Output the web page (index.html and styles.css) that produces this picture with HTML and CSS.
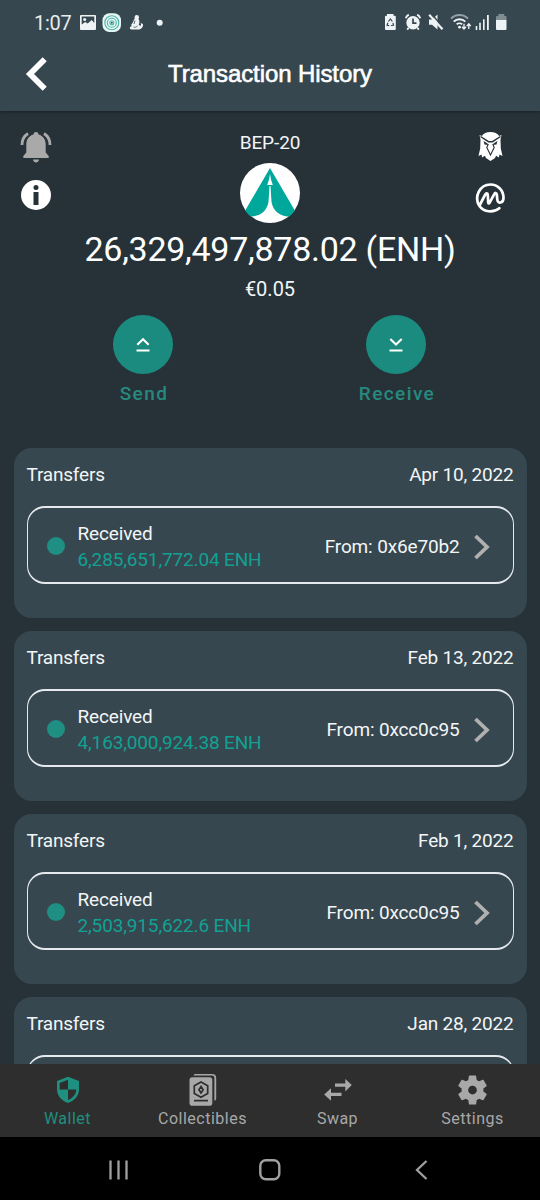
FILE: index.html
```html
<!DOCTYPE html>
<html lang="en">
<head>
<meta charset="utf-8">
<title>Transaction History</title>
<link rel="stylesheet" href="styles.css">
</head>
<body>
<div class="app">
  <header class="header">
    <div class="status">
      <span class="clock">1:07</span>
      <svg class="status-left" width="90" height="24" viewBox="77 11 90 24">
        <path fill="#eef3f5" fill-rule="evenodd" d="M81 15h14a1 1 0 0 1 1 1v13a1 1 0 0 1-1 1H81a1 1 0 0 1-1-1V16a1 1 0 0 1 1-1zm.7 1.500v8l3.500-2.500 2.500 1.500 4-3.500 2.600 3V16.500z"/>
        <circle cx="84.700" cy="19.500" r="1.500" fill="#eef3f5"/>
        <rect x="102.500" y="13.200" width="18.500" height="18.800" rx="7" fill="#e8f7f5"/>
        <g fill="none" stroke="#4fb5a9" stroke-width="1.100"><circle cx="111.800" cy="22.700" r="7"/><circle cx="111.800" cy="22.700" r="4.500"/><circle cx="111.800" cy="22.700" r="2"/></g>
        <circle cx="111.800" cy="22.700" r="1" fill="#24675f"/>
        <circle cx="136.800" cy="17.300" r="2.200" fill="#eef3f5"/>
        <path fill="#eef3f5" d="M134.500 18.500h3.700c1.500 2 1.500 4 .6 6 .8 1.500 1.800 1.500 2.300.3l-.6-1.800 2.400 1 .1 1.700c-.6 2.700-3 3.900-5.500 3.900h-5c-3.200 0-3.600-3-.8-3.400l-.5-1.500 1.600-2.300z"/>
        <path d="M133.500 27c1.500.6 3 .2 4-1.200M135 20.500l-1 3.500" stroke="#37474f" stroke-width=".8" fill="none"/>
        <circle cx="159.700" cy="22.800" r="3" fill="#eef3f5"/>
      </svg>
      <svg class="status-right" width="124" height="24" viewBox="384 11 124 24">
        <g fill="#eef3f5">
          <path d="M387 14h6.500v1.800h1.300a1 1 0 0 1 1 1V29a1 1 0 0 1-1 1H386a1 1 0 0 1-1-1V16.800a1 1 0 0 1 1-1h1z"/>
          <circle cx="413" cy="22.700" r="6.700"/>
          <path d="M429 19.500h3l5.500-5v15l-5.500-4.800h-3z"/>
          <rect x="475.700" y="26" width="1.600" height="4"/><rect x="479.200" y="22.700" width="1.600" height="7.300"/><rect x="483" y="19.300" width="1.600" height="10.700"/><rect x="487" y="15" width="1.800" height="15"/>
          <path d="M496 20h10.500v9a1 1 0 0 1-1 1H497a1 1 0 0 1-1-1z"/>
        </g>
        <path d="M388.400 21.500l2-2.500 2 2.500M392.900 23l.6 2.300-2.500.2M389.200 25.600l-2.100-.3.800-2.500" fill="none" stroke="#37474f" stroke-width="1.200"/>
        <path d="M413 18.500v4.700h3.500" fill="none" stroke="#37474f" stroke-width="1.700"/>
        <path d="M405.800 18.200c.5-1.600 1.500-2.700 3-3.500M420.200 18.200c-.5-1.600-1.500-2.700-3-3.500M408.500 28l-1.300 1.700M417.500 28l1.300 1.700" fill="none" stroke="#eef3f5" stroke-width="1.900"/>
        <path d="M430.700 13l13 15" stroke="#37474f" stroke-width="1.500"/>
        <path d="M429.200 14.800l13.300 14.500" stroke="#eef3f5" stroke-width="2.200"/>
        <path d="M451 18.700c4.500-5 12.500-5 17 0" fill="none" stroke="#93a0a6" stroke-width="1.900"/>
        <path d="M453.700 21.700c3-3.200 8.600-3.200 11.600 0M456.700 24.400c1.500-1.400 4-1.400 5.500 0" fill="none" stroke="#eef3f5" stroke-width="1.900"/>
        <circle cx="459.500" cy="27.200" r="1.400" fill="#eef3f5"/>
        <path d="M464 23.800v5m-2-2 2 2.300 2-2.300M468.800 29v-5m-2 2.200 2-2.400 2 2.400" fill="none" stroke="#eef3f5" stroke-width="1.300"/>
        <path d="M498.300 14h6v2h1.200a1 1 0 0 1 1 1v3H496v-3a1 1 0 0 1 1-1h1.300z" fill="#7f8c92"/>
      </svg>
    </div>
    <div class="title-bar">
      <svg class="back" width="24" height="38" viewBox="25 55 24 38"><path d="M44.700 59.300 30 74l14.700 14.700" fill="none" stroke="#fff" stroke-width="5.800"/></svg>
      <h1 class="title">Transaction History</h1>
    </div>
  </header>

  <main class="content">
    <section class="summary">
      <div class="side">
        <svg class="bell" width="34" height="34" viewBox="19 130 34 34">
          <path fill="#a9a9a9" d="M33.500 134.500c0-3.300 5-3.300 5 0 4.800 1.300 7.200 5.300 7.200 9.800v8.200l3 3.500v2H23.300v-2l3-3.500v-8.200c0-4.500 2.400-8.500 7.200-9.800zM33 159.600h6c-.3 3.800-5.700 3.800-6 0z"/>
          <path d="M28 133.500c-4 2.500-6 6.300-6 11.500M44 133.500c4 2.500 6 6.300 6 11.500" fill="none" stroke="#a9a9a9" stroke-width="2.800"/>
        </svg>
        <svg class="info" width="32" height="32" viewBox="20 179 32 32">
          <circle cx="36" cy="195" r="15" fill="#fff"/>
          <circle cx="36" cy="187.500" r="2.500" fill="#263238"/>
          <path fill="#263238" d="M33.500 192h5v13h-5z"/>
        </svg>
      </div>
      <div class="balance">
        <div class="network">BEP-20</div>
        <svg class="token" width="60" height="60" viewBox="240 163 60 60">
          <circle cx="270" cy="193" r="30" fill="#fff"/>
          <path fill="#00a79b" d="M270 168l24.800 42.500c-1.500 2.300-3.600 4.500-5.800 6.200-9-.9-15.500-4.700-17.500-14.700l-1-16h-1l-1 16c-2 10-8.500 13.800-17.500 14.700-2.200-1.700-4.300-3.900-5.800-6.200z"/>
          <path fill="#fff" d="M270 174l1 5.500 1.800 5.500h-5.600l1.800-5.500z"/>
        </svg>
        <div class="amount">26,329,497,878.02 (ENH)</div>
        <div class="fiat">€0.05</div>
      </div>
      <div class="side side-right">
        <svg class="eagle" width="26" height="32" viewBox="478 130 26 32">
          <path fill="#fff" d="M490.500 132c4 0 7 1.500 8.700 4l2.300-1-1 4.500.3 9 1.700 7.500-3-1.500-.6 3-2.800-1.800-1.100 2.300-4.500 3-4.500-3-1.100-2.300-2.800 1.800-.6-3-3 1.500 1.700-7.500.3-9-1-4.500 2.300 1c1.700-2.500 4.700-4 8.700-4z"/>
          <path d="M480.500 136.500l8 5.200h4l8-5.200" stroke="#263238" stroke-width="1.400" fill="none"/>
          <path d="M483.500 141l4 2.500.5 1.500-3.500-.5zM497.500 141l-4 2.500-.5 1.500 3.500-.5z" fill="#263238"/>
          <path d="M488.300 144l-1.500 3.500 3.700 7.500 3.700-7.500-1.500-3.500" stroke="#263238" stroke-width="1.100" fill="none"/>
        </svg>
        <svg class="cmc" width="32" height="32" viewBox="475 182 32 32">
          <path d="M499.300 208.200c-6 5-15.500 4-20-2.500-5.500-9 .5-21.200 11.200-21.200 7 0 13 5.500 13 13.500 0 5.500-6 6-6.200 1.500l-.5-5c-.3-2-1.800-2-2.700-.2l-4.600 8.500c-.5 1-1.300.8-1.300-.3l-.4-7.500c-.1-2-1.700-2-2.600-.4l-5.700 10.900" fill="none" stroke="#fff" stroke-width="2.700" stroke-linecap="round" stroke-linejoin="round"/>
        </svg>
      </div>
    </section>

    <section class="actions">
      <div class="action">
        <span class="round"><svg width="20" height="20" viewBox="0 0 20 20"><path d="m4.300 9.700 5.700-5.500 5.700 5.500M3.500 15.500h13" fill="none" stroke="#fff" stroke-width="2.100"/></svg></span>
        <span class="action-label">Send</span>
      </div>
      <div class="action">
        <span class="round"><svg width="20" height="20" viewBox="0 0 20 20"><path d="m4.300 4 5.700 5.500L15.700 4M3.500 15.500h13" fill="none" stroke="#fff" stroke-width="2.100"/></svg></span>
        <span class="action-label">Receive</span>
      </div>
    </section>

    <section class="history">
      <article class="card">
        <div class="card-head"><span>Transfers</span><span>Apr 10, 2022</span></div>
        <div class="entry">
          <span class="dot"></span>
          <div class="entry-main"><span>Received</span><span class="value">6,285,651,772.04 ENH</span></div>
          <span class="from">From: 0x6e70b2</span>
          <svg class="chevron" width="18" height="26" viewBox="0 0 18 26"><path d="m2.500 2 11.500 11-11.500 11" fill="none" stroke="#b0b0b0" stroke-width="3.800"/></svg>
        </div>
      </article>
      <article class="card">
        <div class="card-head"><span>Transfers</span><span>Feb 13, 2022</span></div>
        <div class="entry">
          <span class="dot"></span>
          <div class="entry-main"><span>Received</span><span class="value">4,163,000,924.38 ENH</span></div>
          <span class="from">From: 0xcc0c95</span>
          <svg class="chevron" width="18" height="26" viewBox="0 0 18 26"><path d="m2.500 2 11.500 11-11.500 11" fill="none" stroke="#b0b0b0" stroke-width="3.800"/></svg>
        </div>
      </article>
      <article class="card">
        <div class="card-head"><span>Transfers</span><span>Feb 1, 2022</span></div>
        <div class="entry">
          <span class="dot"></span>
          <div class="entry-main"><span>Received</span><span class="value">2,503,915,622.6 ENH</span></div>
          <span class="from">From: 0xcc0c95</span>
          <svg class="chevron" width="18" height="26" viewBox="0 0 18 26"><path d="m2.500 2 11.500 11-11.500 11" fill="none" stroke="#b0b0b0" stroke-width="3.800"/></svg>
        </div>
      </article>
      <article class="card">
        <div class="card-head"><span>Transfers</span><span>Jan 28, 2022</span></div>
        <div class="entry"></div>
      </article>
    </section>
  </main>

  <nav class="tabs">
    <div class="tab tab-active">
      <svg width="36" height="36" viewBox="49.500 1072 36 36">
        <path fill="currentColor" fill-rule="evenodd" d="M67.500 1076.800l11 4.300v8.400c0 6-4.300 11.300-11 13.500-6.700-2.200-11-7.500-11-13.500v-8.400zM67.500 1079.700l-8.300 3.300v6.500h8.300zM67.500 1089.500v10.600c5-2.200 8-5.600 8.300-10.600z"/>
      </svg>
      <span>Wallet</span>
    </div>
    <div class="tab">
      <svg width="36" height="36" viewBox="184.500 1072 36 36">
        <path d="M194 1074h17.500c2.800 0 4.200 1.300 4.200 4v20.500c0 1.200-.8 2-1.800 2.300v-22.500c0-2-1-2.700-2.700-2.700H193z" fill="currentColor"/>
        <rect x="189" y="1077.300" width="22.800" height="28.400" rx="2.800" fill="currentColor"/>
        <path d="M200.500 1082l6.700 3.700v7.800l-6.700 3.700-6.700-3.700v-7.800zM200.500 1086.500l2.100 3.200-2.100 3.200-2.100-3.200zM193.500 1100.700h14" fill="none" stroke="#2e2e2e" stroke-width="1.700"/>
      </svg>
      <span>Collectibles</span>
    </div>
    <div class="tab">
      <svg width="36" height="36" viewBox="319.500 1072 36 36">
        <path fill="currentColor" d="M334.500 1083.500h10.300v-4.600l6.500 6.200-6.500 6.300v-4.700h-10.300zM341 1092.700h-10.500v-4.500l-6.800 6.200 6.800 6.300v-4.800H341z"/>
      </svg>
      <span>Swap</span>
    </div>
    <div class="tab">
      <svg width="35" height="36" viewBox="0 0 24 24">
        <path fill="currentColor" d="M19.430 12.980c.04-.32.07-.64.07-.98s-.03-.66-.07-.98l2.110-1.650c.19-.15.24-.42.12-.64l-2-3.460c-.12-.22-.39-.3-.61-.22l-2.490 1c-.52-.4-1.080-.73-1.690-.98l-.38-2.650C14.460 2.180 14.250 2 14 2h-4c-.25 0-.46.18-.49.42l-.38 2.650c-.61.25-1.170.59-1.690.98l-2.490-1c-.23-.09-.49 0-.61.22l-2 3.460c-.13.22-.07.49.12.64l2.110 1.650c-.04.32-.07.65-.07.98s.03.66.07.98l-2.110 1.650c-.19.15-.24.42-.12.64l2 3.460c.12.22.39.3.61.22l2.490-1c.52.4 1.080.73 1.690.98l.38 2.650c.03.24.24.42.49.42h4c.25 0 .46-.18.49-.42l.38-2.650c.61-.25 1.170-.59 1.690-.98l2.490 1c.23.09.49 0 .61-.22l2-3.460c.12-.22.07-.49-.12-.64zM12 15a3 3 0 1 1 0-6 3 3 0 0 1 0 6z"/>
      </svg>
      <span>Settings</span>
    </div>
  </nav>
  <footer class="system">
    <svg width="24" height="24" viewBox="0 0 24 24"><path d="M3.500 2.500v19M11.500 2.500v19M19.500 2.500v19" stroke="#a0a0a0" stroke-width="2.300"/></svg>
    <svg width="24" height="24" viewBox="0 0 24 24"><rect x="2.300" y="2.300" width="19" height="19" rx="5.500" fill="none" stroke="#a0a0a0" stroke-width="2.400"/></svg>
    <svg width="24" height="24" viewBox="0 0 24 24"><path d="M17.500 3 8 12l9.500 9" fill="none" stroke="#a0a0a0" stroke-width="2.300"/></svg>
  </footer>
</div>
</body>
</html>
```
FILE: styles.css
```css
* { box-sizing: border-box; }
body { margin: 0; background: #263238; font-family: Roboto, "Liberation Sans", sans-serif; }
svg { display: block; flex: none; }

.app { display: flex; flex-direction: column; width: 540px; height: 1200px; overflow: hidden; color: #f3f6f7; }

.header { flex: none; height: 111px; background: #37474f; box-shadow: 0 1px 3px rgba(0, 0, 0, 0.35); }
.status { display: flex; align-items: center; height: 46px; padding: 0 32px 0 34px; }
.clock { width: 43px; font-size: 20px; line-height: 24px; white-space: nowrap; letter-spacing: -0.3px; color: #e6ecee; }
.status-right { margin-left: auto; }
.title-bar { display: grid; grid-template-columns: 24px 1fr 24px; align-items: center; height: 56px; padding: 0 25px; }
.title { margin: 0; text-align: center; font-family: "Liberation Sans", Arial, sans-serif; font-size: 24px; line-height: 28px; font-weight: 400; color: #fff; -webkit-text-stroke: 0.6px #fff; letter-spacing: -0.1px; }

.content { flex: 1; min-height: 0; overflow: hidden; }
.summary { display: grid; grid-template-columns: 34px 1fr 34px; padding: 19px 32px 0 19px; height: 204px; }
.side { display: flex; flex-direction: column; align-items: center; gap: 15px; }
.side-right { gap: 20px; }
.balance { display: flex; flex-direction: column; align-items: center; padding-left: 13px; white-space: nowrap; }
.network { font-size: 19px; line-height: 26px; letter-spacing: -0.1px; }
.token { margin-top: 7px; }
.amount { margin-top: 5px; font-size: 34px; line-height: 42px; letter-spacing: -0.27px; color: #fff; }
.fiat { margin-top: 7px; font-size: 20px; line-height: 24px; }

.actions { display: flex; justify-content: space-between; height: 133px; padding: 0 94px 0 93px; }
.action { display: flex; flex-direction: column; align-items: center; width: 100px; }
.round { display: grid; place-items: center; width: 60px; height: 59px; border-radius: 50%; background: #1b8a7f; }
.action-label { margin-top: 8px; padding-left: 2px; font-size: 19px; line-height: 24px; font-weight: 500; letter-spacing: 1.4px; color: #26897e; }

.history { display: flex; flex-direction: column; gap: 13px; padding: 0 13.5px; }
.card { flex: none; height: 170px; padding: 14px 13px 0; border-radius: 18px; background: #37474f; }
.card-head { display: flex; justify-content: space-between; font-size: 19px; line-height: 26px; letter-spacing: -0.2px; }
.entry { display: flex; align-items: center; height: 78px; margin-top: 18px; padding: 0 22px 0 19px; border: solid #e6eaee; border-width: 2px 1px; border-radius: 18px; font-size: 19px; letter-spacing: -0.15px; }
.dot { flex: none; width: 18px; height: 18px; margin-top: 2px; border-radius: 50%; background: #1f8f84; }
.entry-main { display: flex; flex-direction: column; margin: 3px 0 0 13px; line-height: 25.5px; }
.value { color: #11a193; }
.from { margin: 3px 0 0 auto; }
.chevron { margin: 3px 0 0 13px; }

.tabs { flex: none; display: grid; grid-template-columns: repeat(4, 1fr); height: 73px; padding-top: 8px; background: #2e2e2e; color: #a8a8a8; }
.tab { display: flex; flex-direction: column; align-items: center; font-size: 16px; line-height: 22px; letter-spacing: 0.5px; }
.tab-active { color: #1f8f80; }
.system { flex: none; display: flex; justify-content: space-between; align-items: center; height: 63px; padding: 3px 107px 0; background: #000; }
```
